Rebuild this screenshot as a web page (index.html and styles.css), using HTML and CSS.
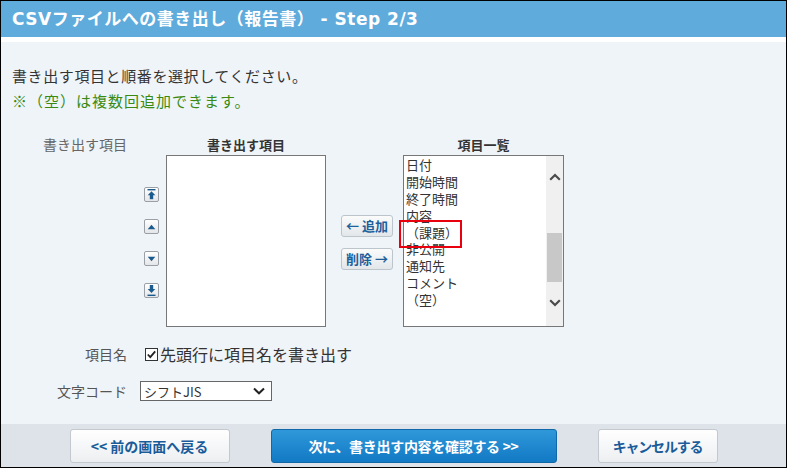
FILE: index.html
```html
<!DOCTYPE html>
<html lang="ja">
<head>
<meta charset="utf-8">
<title>CSVファイルへの書き出し</title>
<link rel="stylesheet" href="styles.css">
</head>
<body>
<div class="frame">
  <div class="header">
    <h1 class="title">CSVファイルへの書き出し（報告書） - Step 2/3</h1>
  </div>
  <div class="main">
    <p class="lead">書き出す項目と順番を選択してください。</p>
    <p class="note">※（空）は複数回追加できます。</p>

    <div class="pick">
      <div class="field-label">書き出す項目</div>
      <div class="move-col">
        <button class="move-btn" title="先頭へ">
          <svg width="9" height="11" viewBox="0 0 9 11"><rect x="0.5" y="0" width="8" height="1.4" fill="#1a5a8c"/><path d="M4.5 2.2 L8.3 6.2 L0.7 6.2 Z" fill="#1a5a8c"/><rect x="2.8" y="6" width="3.4" height="4.2" fill="#1a5a8c"/></svg>
        </button>
        <button class="move-btn" title="上へ">
          <svg width="9" height="6" viewBox="0 0 9 6"><path d="M4.5 0.8 L8.3 5.2 L0.7 5.2 Z" fill="#1a5a8c"/></svg>
        </button>
        <button class="move-btn" title="下へ">
          <svg width="9" height="6" viewBox="0 0 9 6"><path d="M0.7 0.8 L8.3 0.8 L4.5 5.2 Z" fill="#1a5a8c"/></svg>
        </button>
        <button class="move-btn" title="末尾へ">
          <svg width="9" height="11" viewBox="0 0 9 11"><rect x="2.8" y="0" width="3.4" height="4.2" fill="#1a5a8c"/><path d="M0.7 4 L8.3 4 L4.5 8 Z" fill="#1a5a8c"/><rect x="0.5" y="9.6" width="8" height="1.4" fill="#1a5a8c"/></svg>
        </button>
      </div>
      <div class="list-col list-left">
        <div class="list-head">書き出す項目</div>
        <div class="list-box"></div>
      </div>
      <div class="add-col">
        <button class="add-btn">← 追加</button>
        <button class="add-btn">削除 →</button>
      </div>
      <div class="list-col list-right">
        <div class="list-head">項目一覧</div>
        <div class="list-box">
          <ul class="items">
            <li>日付</li>
            <li>開始時間</li>
            <li>終了時間</li>
            <li>内容</li>
            <li>（課題）</li>
            <li>非公開</li>
            <li>通知先</li>
            <li>コメント</li>
            <li>（空）</li>
          </ul>
          <div class="scrollbar">
            <div class="sb-up"><svg width="12" height="8" viewBox="0 0 12 8"><path d="M1.2 6.8 L6 2 L10.8 6.8" fill="none" stroke="#4a4a4a" stroke-width="2.2"/></svg></div>
            <div class="sb-thumb"></div>
            <div class="sb-down"><svg width="12" height="8" viewBox="0 0 12 8"><path d="M1.2 1.2 L6 6 L10.8 1.2" fill="none" stroke="#4a4a4a" stroke-width="2.2"/></svg></div>
          </div>
          <div class="highlight"></div>
        </div>
      </div>
    </div>

    <div class="row row-name">
      <div class="field-label">項目名</div>
      <label class="check">
        <svg class="checkbox" width="13" height="13" viewBox="0 0 13 13"><rect x="0.5" y="0.5" width="12" height="12" fill="#fff" stroke="#333"/><path d="M2.8 6.5 L5.3 9.2 L10.2 3.4" fill="none" stroke="#222" stroke-width="1.8"/></svg>
        <span>先頭行に項目名を書き出す</span>
      </label>
    </div>

    <div class="row row-code">
      <div class="field-label">文字コード</div>
      <div class="select">
        <span>シフトJIS</span>
        <svg width="12" height="8" viewBox="0 0 12 8"><path d="M1 1.5 L6 6.3 L11 1.5" fill="none" stroke="#222" stroke-width="2"/></svg>
      </div>
    </div>
  </div>

  <div class="footer">
    <button class="btn btn-back">&lt;&lt; 前の画面へ戻る</button>
    <button class="btn btn-next">次に、書き出す内容を確認する &gt;&gt;</button>
    <button class="btn btn-cancel">キャンセルする</button>
  </div>
</div>
</body>
</html>
```

FILE: styles.css
```css
html, body {
  margin: 0;
  padding: 0;
}

body {
  font-family: "Noto Sans CJK JP", "Noto Sans", sans-serif;
  color: #333;
  background: #fff;
}

.frame {
  width: 787px;
  height: 468px;
  box-sizing: border-box;
  border: 1px solid #000;
  display: flex;
  flex-direction: column;
  background: #eff4f8;
}

.header {
  flex: none;
  height: 36px;
  background: #5fabdc;
  border-bottom: 5px solid #fff;
}

.title {
  margin: 0;
  padding-left: 11px;
  font-family: "DejaVu Sans", "Noto Sans CJK JP", sans-serif;
  font-weight: bold;
  font-size: 17px;
  letter-spacing: 0.5px;
  line-height: 36px;
  color: #fff;
  white-space: nowrap;
}

.main {
  flex: 1;
  padding-top: 21px;
}

.lead,
.note {
  margin: 0 0 0 11px;
  font-size: 15px;
  line-height: 25px;
}

.lead {
  color: #333;
  letter-spacing: 0.6px;
}

.note {
  color: #3a8a12;
  letter-spacing: 1px;
}

.pick {
  display: flex;
  align-items: flex-start;
  margin-top: 23px;
}

.field-label {
  flex: none;
  width: 126px;
  text-align: right;
  font-size: 14px;
  line-height: 17px;
  color: #666;
}

.move-col {
  flex: none;
  margin-left: 17px;
  width: 15px;
  padding-top: 51px;
  display: flex;
  flex-direction: column;
  gap: 17px;
}

.move-btn {
  width: 15px;
  height: 15px;
  padding: 0;
  box-sizing: border-box;
  border: 1px solid #9aa0a5;
  border-radius: 2px;
  background: linear-gradient(#ffffff, #e4e6e8);
  display: flex;
  align-items: center;
  justify-content: center;
}

.list-col {
  flex: none;
}

.list-left {
  margin-left: 7px;
  width: 160px;
}

.list-right {
  margin-left: 10px;
  width: 161px;
}

.list-head {
  height: 19px;
  line-height: 17px;
  text-align: center;
  font-size: 13px;
  font-weight: bold;
  color: #333;
}

.list-box {
  position: relative;
  height: 172px;
  box-sizing: border-box;
  border: 1px solid #777;
  background: #fff;
  display: flex;
}

.add-col {
  flex: none;
  margin-left: 15px;
  width: 52px;
  padding-top: 79px;
  display: flex;
  flex-direction: column;
  gap: 11px;
}

.add-btn {
  width: 52px;
  height: 22px;
  padding: 0;
  box-sizing: border-box;
  border: 1px solid #bcc5cc;
  border-radius: 3px;
  background: linear-gradient(#fbfbfb, #e3e7ea);
  font-family: "Noto Sans CJK JP", sans-serif;
  font-size: 13px;
  font-weight: bold;
  line-height: 18px;
  color: #1d5f9b;
}

.items {
  flex: 1;
  list-style: none;
  margin: 0;
  padding: 1px 0 0 2px;
  font-size: 13px;
  line-height: 16.875px;
  color: #333;
}

.items li {
  height: 16.875px;
}

.scrollbar {
  flex: none;
  width: 17px;
  background: #f0f0f0;
  display: flex;
  flex-direction: column;
}

.sb-up {
  height: 42px;
  display: flex;
  align-items: center;
  justify-content: center;
}

.sb-thumb {
  margin-top: 35px;
  height: 49px;
  margin-left: 1px;
  margin-right: 1px;
  background: #c8c8c8;
}

.sb-down {
  margin-top: auto;
  margin-bottom: 8px;
  height: 30px;
  display: flex;
  align-items: center;
  justify-content: center;
}

.highlight {
  position: absolute;
  left: -5px;
  top: 64px;
  width: 63px;
  height: 28px;
  box-sizing: border-box;
  border: 2px solid #e8000f;
}

.row {
  display: flex;
  align-items: center;
  height: 20px;
}

.row .field-label {
  color: #555;
}

.row-name {
  margin-top: 17px;
}

.check {
  margin-left: 18px;
  display: flex;
  align-items: center;
  gap: 2px;
  font-size: 16px;
  line-height: 20px;
  color: #333;
}

.row-code {
  margin-top: 17px;
}

.select {
  margin-left: 13px;
  width: 132px;
  height: 20px;
  box-sizing: border-box;
  border: 1px solid #666;
  background: #fff;
  display: flex;
  align-items: center;
  justify-content: space-between;
  padding: 0 6px 0 3px;
  font-size: 13px;
  color: #333;
}

.footer {
  flex: none;
  height: 43px;
  box-sizing: border-box;
  padding-top: 5px;
  background: #dde3e8;
  display: flex;
  justify-content: center;
  align-items: flex-start;
  gap: 41px;
}

.btn {
  height: 34px;
  box-sizing: border-box;
  border-radius: 3px;
  padding: 0;
  font-family: "Noto Sans CJK JP", sans-serif;
  font-size: 14px;
  font-weight: bold;
  white-space: nowrap;
}

.btn-back,
.btn-cancel {
  border: 1px solid #c3c9ce;
  background: linear-gradient(#ffffff, #eceff1);
  color: #1a5c9a;
}

.btn-back {
  width: 160px;
}

.btn-cancel {
  width: 120px;
  letter-spacing: -1.2px;
}

.btn-next {
  width: 286px;
  border: 1px solid #1168a8;
  background: linear-gradient(#2e98da, #1279c4);
  color: #fff;
  letter-spacing: -0.3px;
}
```
